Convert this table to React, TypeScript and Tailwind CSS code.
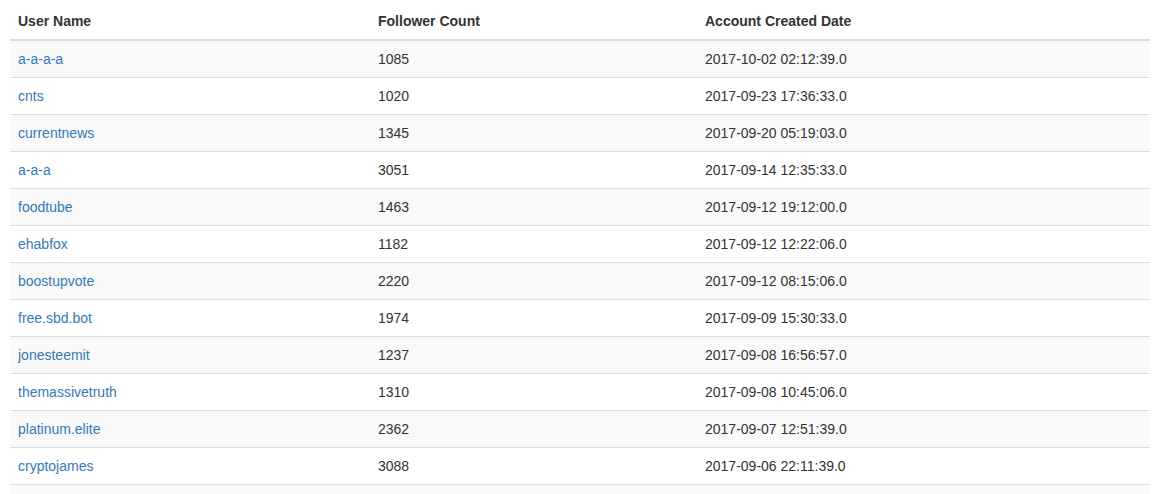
const rows = [
  { name: 'a-a-a-a', followers: 1085, created: '2017-10-02 02:12:39.0' },
  { name: 'cnts', followers: 1020, created: '2017-09-23 17:36:33.0' },
  { name: 'currentnews', followers: 1345, created: '2017-09-20 05:19:03.0' },
  { name: 'a-a-a', followers: 3051, created: '2017-09-14 12:35:33.0' },
  { name: 'foodtube', followers: 1463, created: '2017-09-12 19:12:00.0' },
  { name: 'ehabfox', followers: 1182, created: '2017-09-12 12:22:06.0' },
  { name: 'boostupvote', followers: 2220, created: '2017-09-12 08:15:06.0' },
  { name: 'free.sbd.bot', followers: 1974, created: '2017-09-09 15:30:33.0' },
  { name: 'jonesteemit', followers: 1237, created: '2017-09-08 16:56:57.0' },
  { name: 'themassivetruth', followers: 1310, created: '2017-09-08 10:45:06.0' },
  { name: 'platinum.elite', followers: 2362, created: '2017-09-07 12:51:39.0' },
  { name: 'cryptojames', followers: 3088, created: '2017-09-06 22:11:39.0' },
];

export default function App() {
  return (
    <div className="min-h-screen bg-white px-[10px] pt-[3px] font-['Liberation_Sans',Arial,sans-serif] text-[14px] leading-[20px] text-[#333]">
      <table className="w-[1140px] border-collapse">
        <thead>
          <tr>
            <th className="w-[360px] border-b-2 border-[#ddd] p-2 text-left font-bold">User Name</th>
            <th className="w-[327px] border-b-2 border-[#ddd] p-2 text-left font-bold">Follower Count</th>
            <th className="border-b-2 border-[#ddd] p-2 text-left font-bold">Account Created Date</th>
          </tr>
        </thead>
        <tbody>
          {rows.map((r, i) => (
            <tr key={r.name} className={i % 2 === 0 ? 'bg-[#f9f9f9]' : 'bg-white'}>
              <td className="border-t border-[#ddd] p-2">
                <a href="#" className="text-[#337ab7]">{r.name}</a>
              </td>
              <td className="border-t border-[#ddd] p-2">{r.followers}</td>
              <td className="border-t border-[#ddd] p-2">{r.created}</td>
            </tr>
          ))}
          {/* next row, only its top edge shows in the frame */}
          <tr className="bg-[#f9f9f9]">
            <td className="h-[37px] border-t border-[#ddd] p-2" />
            <td className="border-t border-[#ddd] p-2" />
            <td className="border-t border-[#ddd] p-2" />
          </tr>
        </tbody>
      </table>
    </div>
  );
}
